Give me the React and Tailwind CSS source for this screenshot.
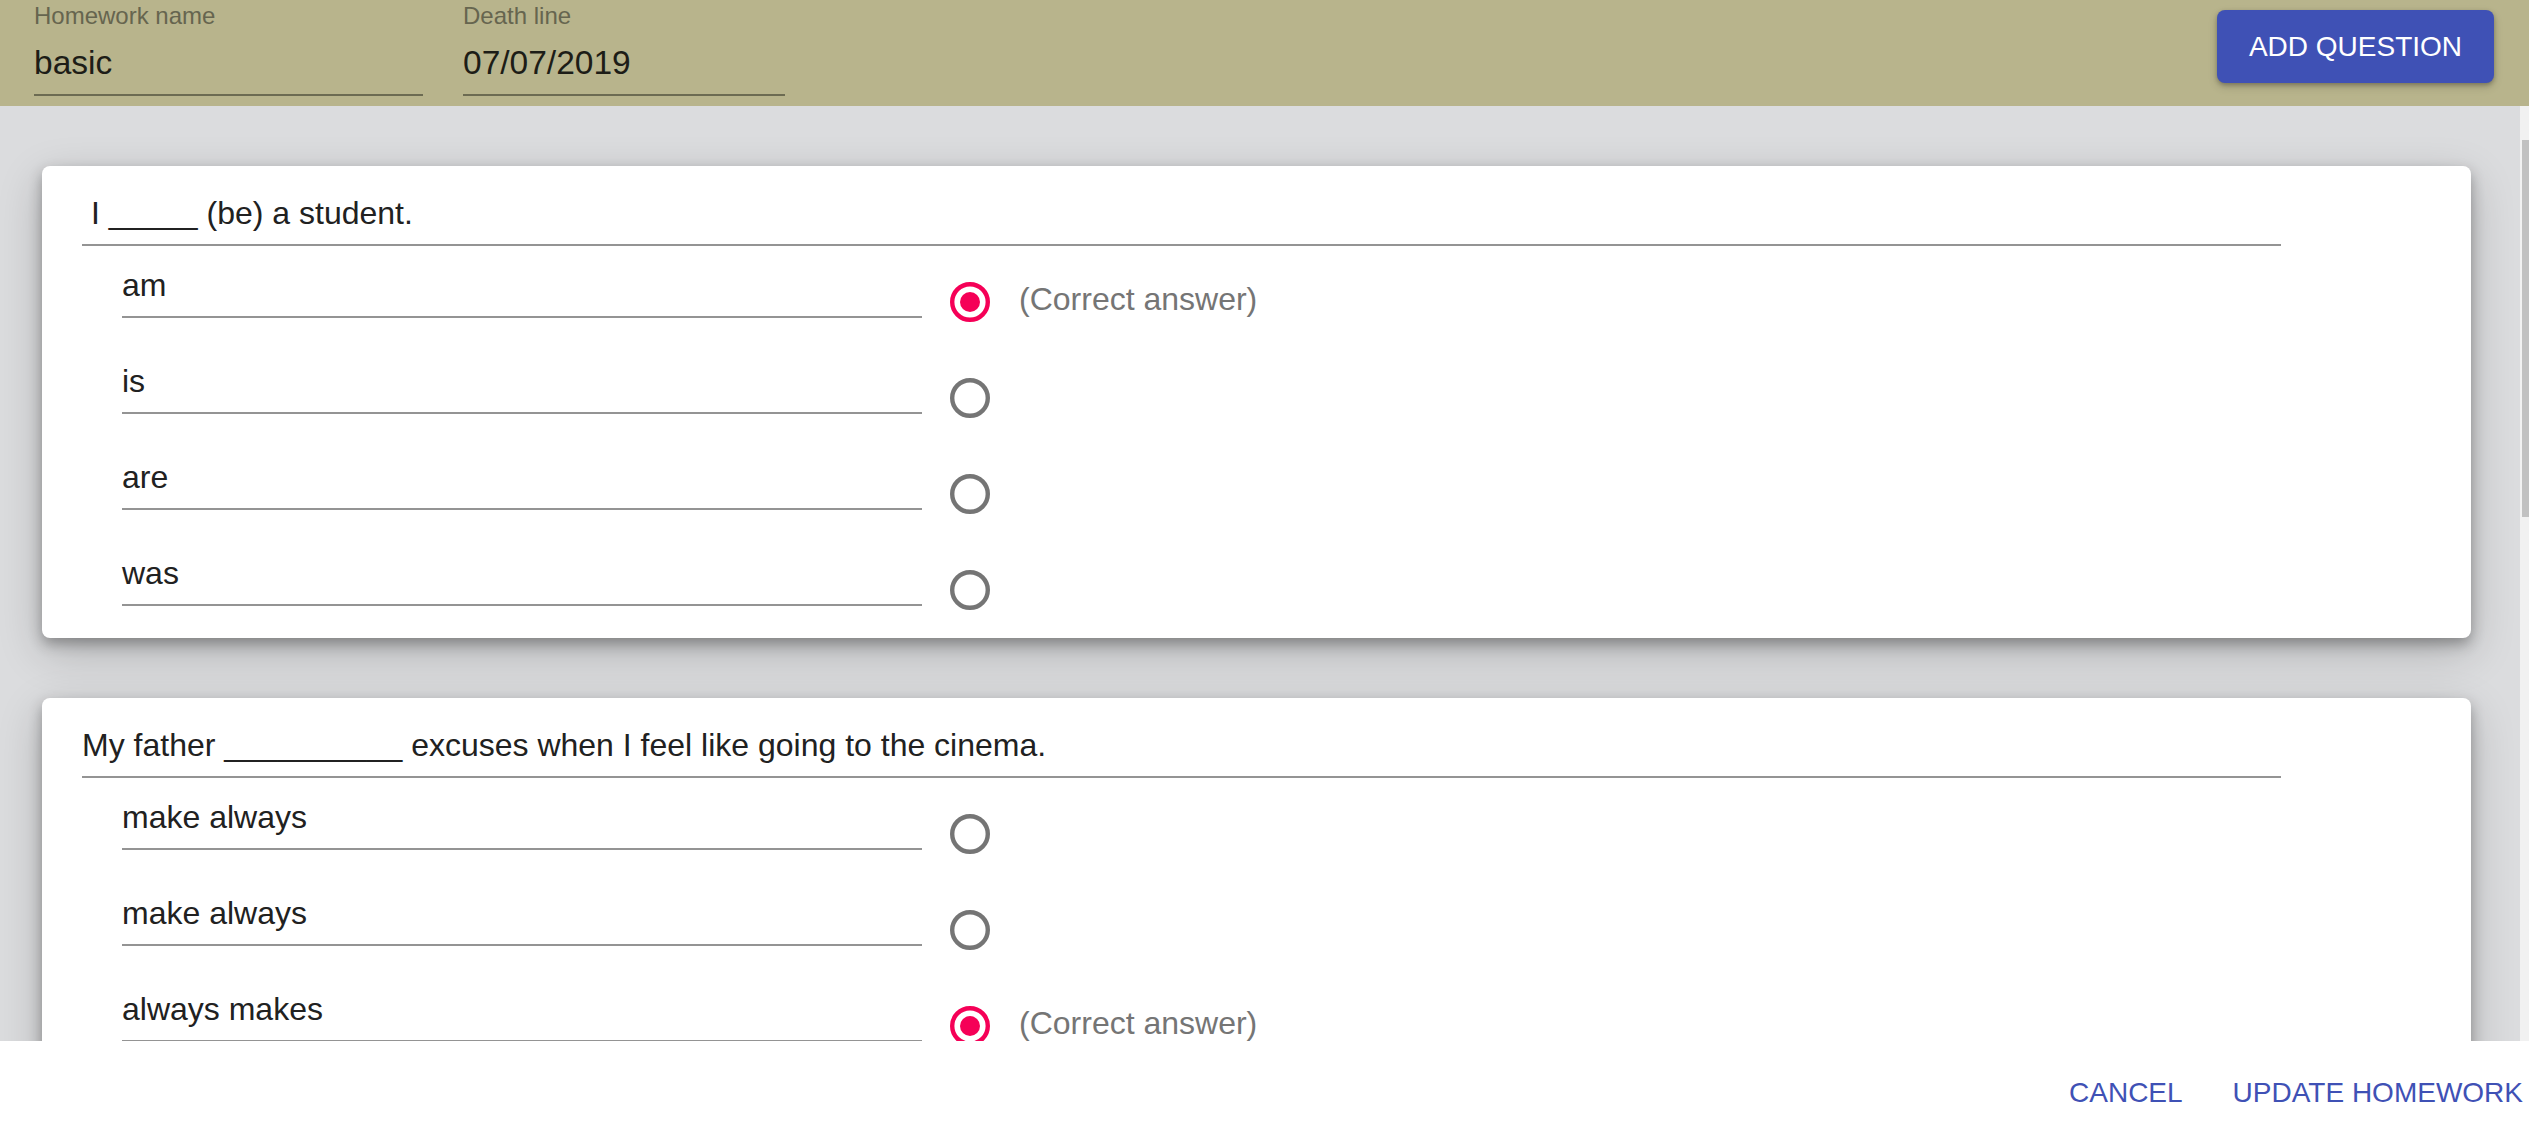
const font = { fontFamily: '"Liberation Sans", Arial, sans-serif' };

const questions = [
  {
    text: ' I _____ (be) a student.',
    answers: ['am', 'is', 'are', 'was'],
    correct: 0,
  },
  {
    text: 'My father __________ excuses when I feel like going to the cinema.',
    answers: ['make always', 'make always', 'always makes'],
    correct: 2,
  },
];

function Radio({ checked }) {
  return (
    <svg viewBox="2 2 20 20" className="w-[40px] h-[40px]">
      <circle cx="12" cy="12" r="8.9" fill="none" strokeWidth="2.2" stroke={checked ? '#f50057' : '#757575'} />
      {checked && <circle cx="12" cy="12" r="5" fill="#f50057" />}
    </svg>
  );
}

function HeaderField({ label, value, width }) {
  return (
    <div className={`${width} pt-[2px] border-b-2 border-[#6c6b52] pb-[13px]`}>
      <div className="text-[24px] leading-[28px] text-[#66654f]">{label}</div>
      <div className="mt-[15px] text-[33.5px] leading-[36px] text-[#1d1d17]">{value}</div>
    </div>
  );
}

function QuestionCard({ q }) {
  return (
    <div className="bg-white rounded-[8px] pl-[40px] pt-[29px] shadow-[0_6px_14px_rgba(0,0,0,0.3),0_14px_45px_rgba(0,0,0,0.2)] shrink-0">
      <div className="w-[2199px] border-b-2 border-[#949494] pb-[13px]">
        <div className="text-[32px] leading-[36px] text-[#212121] whitespace-pre">{q.text}</div>
      </div>
      <div className="mt-[8px] pl-[40px]">
        {q.answers.map((a, i) => (
          <div key={i} className="flex items-start h-[96px]">
            <div className="w-[800px] pt-[13px] pb-[13px] border-b-2 border-[#949494]">
              <div className="text-[32px] leading-[36px] text-[#212121]">{a}</div>
            </div>
            <div className="ml-[28px] mt-[28px]">
              <Radio checked={i === q.correct} />
            </div>
            {i === q.correct && (
              <div className="ml-[29px] mt-[27px] text-[32px] leading-[36px] text-[#757575]">(Correct answer)</div>
            )}
          </div>
        ))}
      </div>
    </div>
  );
}

export default function App() {
  return (
    <div className="w-[2529px] h-[1135px] flex flex-col overflow-hidden bg-white" style={font}>
      <div className="h-[106px] shrink-0 bg-[#b8b48c] flex items-start pl-[34px]">
        <HeaderField label="Homework name" value="basic" width="w-[389px]" />
        <div className="ml-[40px]">
          <HeaderField label="Death line" value="07/07/2019" width="w-[322px]" />
        </div>
        <button className="ml-auto mr-[35px] mt-[10px] w-[277px] h-[73px] rounded-[8px] bg-[#3f51b5] text-white text-[28px] uppercase shadow-[0_2px_4px_rgba(0,0,0,0.25),0_4px_10px_rgba(0,0,0,0.15)]">
          Add Question
        </button>
      </div>

      <div className="flex-1 flex min-h-0 bg-[#dbdcde]">
        <div className="flex-1 overflow-hidden pl-[42px] pr-[49px] pt-[60px] flex flex-col gap-[60px]">
          {questions.map((q, i) => (
            <QuestionCard key={i} q={q} />
          ))}
        </div>
        <div className="w-[9px] bg-[#f1f1f1] shrink-0">
          <div className="ml-[2px] mt-[34px] w-[7px] h-[377px] bg-[#c1c1c1]" />
        </div>
      </div>

      <div className="h-[94px] shrink-0 bg-white flex justify-end items-start pt-[36px] pr-[6px] gap-[50px]">
        <button className="text-[28px] leading-[32px] uppercase text-[#3f51b5]">Cancel</button>
        <button className="text-[28px] leading-[32px] uppercase text-[#3f51b5]">Update Homework</button>
      </div>
    </div>
  );
}
